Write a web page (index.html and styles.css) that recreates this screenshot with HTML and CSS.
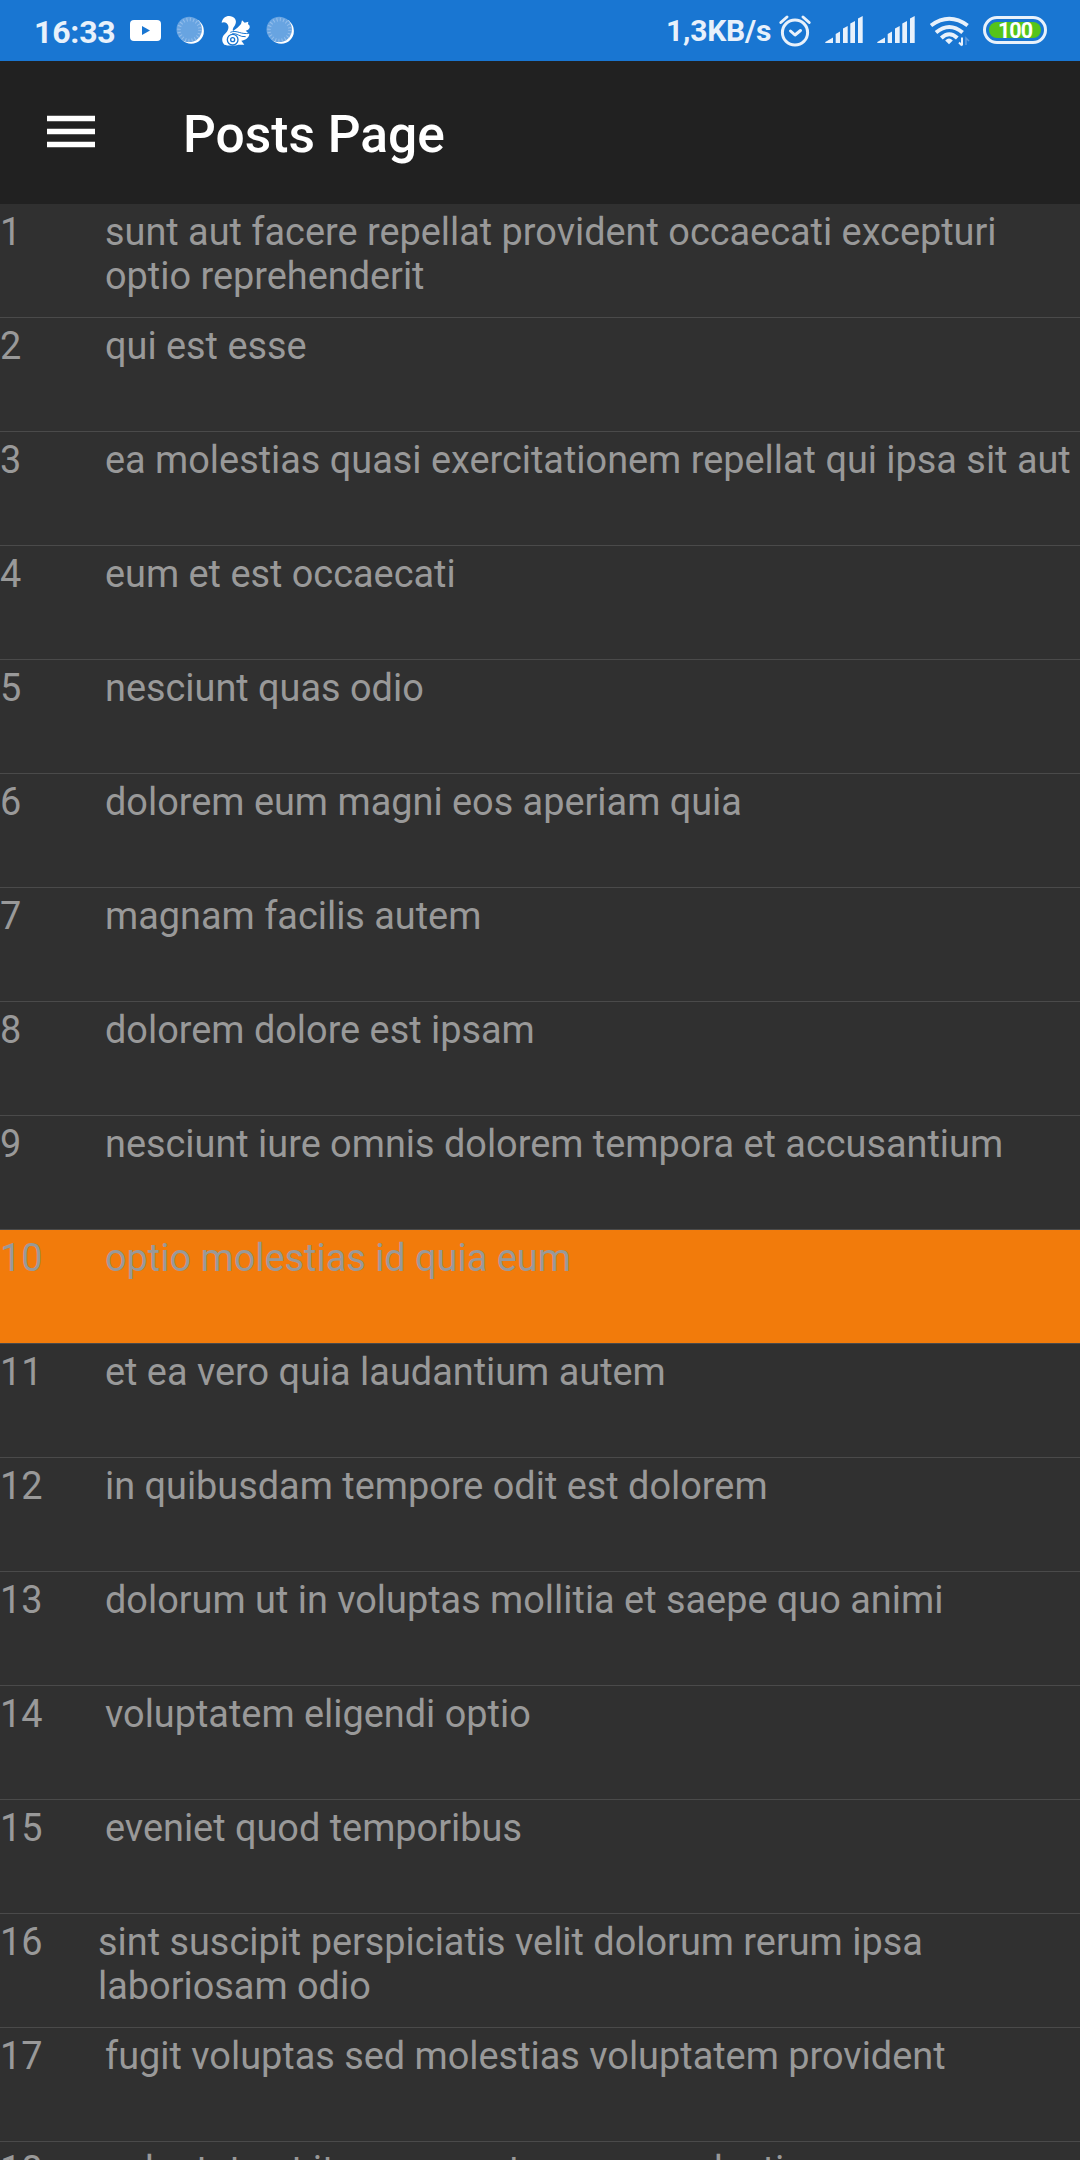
FILE: index.html
```html
<!DOCTYPE html>
<html lang="en">
<head>
<meta charset="utf-8">
<title>Posts Page</title>
<link rel="stylesheet" href="styles.css">
</head>
<body>
<div class="status">
  <span class="clock">16:33</span>
  <svg class="notifications" width="170" height="60" viewBox="126 0 170 60">
    <rect x="130" y="20" width="31" height="21" rx="4" fill="#fff"/>
    <path d="M142 26l8 4.500-8 4.500z" fill="#1976d2"/>
    <g id="dial">
      <circle cx="191.200" cy="31" r="12.700" fill="#fff"/>
      <circle cx="189.200" cy="29.400" r="12.700" fill="#68a4e1"/>
      <circle cx="189.500" cy="30" r="10.500" fill="none" stroke="#93bdeb" stroke-width="3.600" stroke-dasharray="1 2.300"/>
    </g>
    <g transform="translate(205 10) scale(.3333)">
      <path d="M50 38C52 22 68 14 82 20C95 26 95 38 89 47C84 54 82 58 84 63C94 56 104 48 108 42L111 31L119 38L130 35L129 43C133 45 135 48 134 53C132 58 128 61 122 62L133 72C132 84 120 91 109 92L118 104H100C88 108 66 107 58 104C50 96 50 84 56 76C64 68 72 60 70 48C68 38 58 34 50 38Z" fill="#fff"/>
      <path d="M76 67C96 58 108 76 134 69M82 71C98 69 104 82 122 80" fill="none" stroke="#1976d2" stroke-width="3"/>
      <circle cx="83" cy="89" r="16" fill="none" stroke="#1976d2" stroke-width="4"/>
      <circle cx="83" cy="89" r="6" fill="none" stroke="#1976d2" stroke-width="4"/>
    </g>
    <use href="#dial" x="90"/>
  </svg>
  <span class="speed">1,3KB/s</span>
  <svg class="system" width="280" height="60" viewBox="776 0 280 60">
    <g fill="none" stroke="#e8f1fb" stroke-width="3" stroke-linecap="round" stroke-linejoin="round">
      <circle cx="795" cy="32.500" r="12.600"/>
      <path d="M790.500 31l4.500 4 5.500-4.500M780.800 22.500L787 17M803 17l6.200 5.500"/>
    </g>
    <path id="bars" d="M825.300 43v-1l7.700-4.500V43zM835.700 43v-9l4.300-2.500V43zM843 43V28.500l4.700-2.500v17zM850.300 43V23.500l4.700-2.500v22zM858 43V18.500l4.700-2.500v27z" fill="#e8f1fb"/>
    <use href="#bars" x="52"/>
    <path d="M931 25.500q18.300-13.500 36.600 0M936 32.500q13.300-11 26.600 0M941.300 38q8-7.500 16 0" fill="none" stroke="#e8f1fb" stroke-width="4"/>
    <path d="M945.200 40.500q3.800-4 7.600 0l-3.800 3.700z" fill="#e8f1fb"/>
    <path d="M962 37.500v8M959 42.500l3 3" stroke="#e8f1fb" stroke-width="2"/>
    <path d="M966 45v-7l3 3" fill="none" stroke="#5d9bdf" stroke-width="1.500"/>
  </svg>
  <span class="battery"><span class="charge">100</span></span>
</div>
<header class="appbar">
  <svg class="menu" width="48" height="34" viewBox="0 0 48 34"><path d="M0 3.500h48M0 16.500h48M0 29.500h48" stroke="#fff" stroke-width="5.500"/></svg>
  <h1 class="title">Posts Page</h1>
</header>
<main class="list">
  <div class="row"><span class="id">1</span><span class="text">sunt aut facere repellat provident occaecati excepturi<br>optio reprehenderit</span></div>
  <div class="row"><span class="id">2</span><span class="text">qui est esse</span></div>
  <div class="row"><span class="id">3</span><span class="text">ea molestias quasi exercitationem repellat qui ipsa sit aut</span></div>
  <div class="row"><span class="id">4</span><span class="text">eum et est occaecati</span></div>
  <div class="row"><span class="id">5</span><span class="text">nesciunt quas odio</span></div>
  <div class="row"><span class="id">6</span><span class="text">dolorem eum magni eos aperiam quia</span></div>
  <div class="row"><span class="id">7</span><span class="text">magnam facilis autem</span></div>
  <div class="row"><span class="id">8</span><span class="text">dolorem dolore est ipsam</span></div>
  <div class="row"><span class="id">9</span><span class="text">nesciunt iure omnis dolorem tempora et accusantium</span></div>
  <div class="row selected"><span class="id">10</span><span class="text">optio molestias id quia eum</span></div>
  <div class="row"><span class="id">11</span><span class="text">et ea vero quia laudantium autem</span></div>
  <div class="row"><span class="id">12</span><span class="text">in quibusdam tempore odit est dolorem</span></div>
  <div class="row"><span class="id">13</span><span class="text">dolorum ut in voluptas mollitia et saepe quo animi</span></div>
  <div class="row"><span class="id">14</span><span class="text">voluptatem eligendi optio</span></div>
  <div class="row"><span class="id">15</span><span class="text">eveniet quod temporibus</span></div>
  <div class="row wide"><span class="id">16</span><span class="text">sint suscipit perspiciatis velit dolorum rerum ipsa<br>laboriosam odio</span></div>
  <div class="row"><span class="id">17</span><span class="text">fugit voluptas sed molestias voluptatem provident</span></div>
  <div class="row"><span class="id">18</span><span class="text">voluptate et itaque vero tempora molestiae</span></div>
</main>
</body>
</html>
```
FILE: styles.css
```css
* { box-sizing: border-box; }
body {
  margin: 0;
  width: 1080px;
  height: 2160px;
  overflow: hidden;
  display: flex;
  flex-direction: column;
  background: #303030;
  font-family: Roboto, sans-serif;
}
.status {
  flex: none;
  height: 61px;
  display: flex;
  align-items: flex-start;
  padding-left: 34px;
  background: #1976d2;
  color: #e8f1fb;
  white-space: nowrap;
}
.clock { width: 92px; font-size: 32px; font-weight: 700; line-height: 64px; letter-spacing: -0.2px; }
.notifications { flex: none; }
.speed { margin-left: auto; width: 110px; font-size: 30px; font-weight: 700; line-height: 62px; letter-spacing: -0.2px; }
.system { flex: none; margin-right: -73px; }
.battery {
  flex: none;
  margin: 16px 33px 0 0;
  width: 64px;
  height: 28px;
  padding: 3px;
  border: 3px solid #e8f1fb;
  border-radius: 14px;
}
.charge {
  display: block;
  height: 16px;
  border-radius: 8px;
  background: #55c41a;
  color: #fff;
  font-size: 21.5px;
  font-weight: 700;
  line-height: 17px;
  letter-spacing: -1px;
  text-align: center;
}
.appbar {
  flex: none;
  height: 143px;
  display: flex;
  padding-left: 47px;
  background: #212121;
}
.menu { flex: none; margin-top: 54px; }
.title { margin: 43px 0 0 88px; color: #fff; font-size: 51.5px; font-weight: 500; line-height: 61px; }
.list { flex: 1; min-height: 0; overflow: hidden; }
.row {
  height: 114px;
  display: flex;
  border-bottom: 1px solid #4a4a4a;
  color: #999;
  font-size: 37.86px;
  line-height: 44px;
  padding-top: 6px;
  white-space: nowrap;
}
.id { flex: none; width: 105px; }
.wide .id { width: 98px; }
.selected { background: #f27b0b; }
```
